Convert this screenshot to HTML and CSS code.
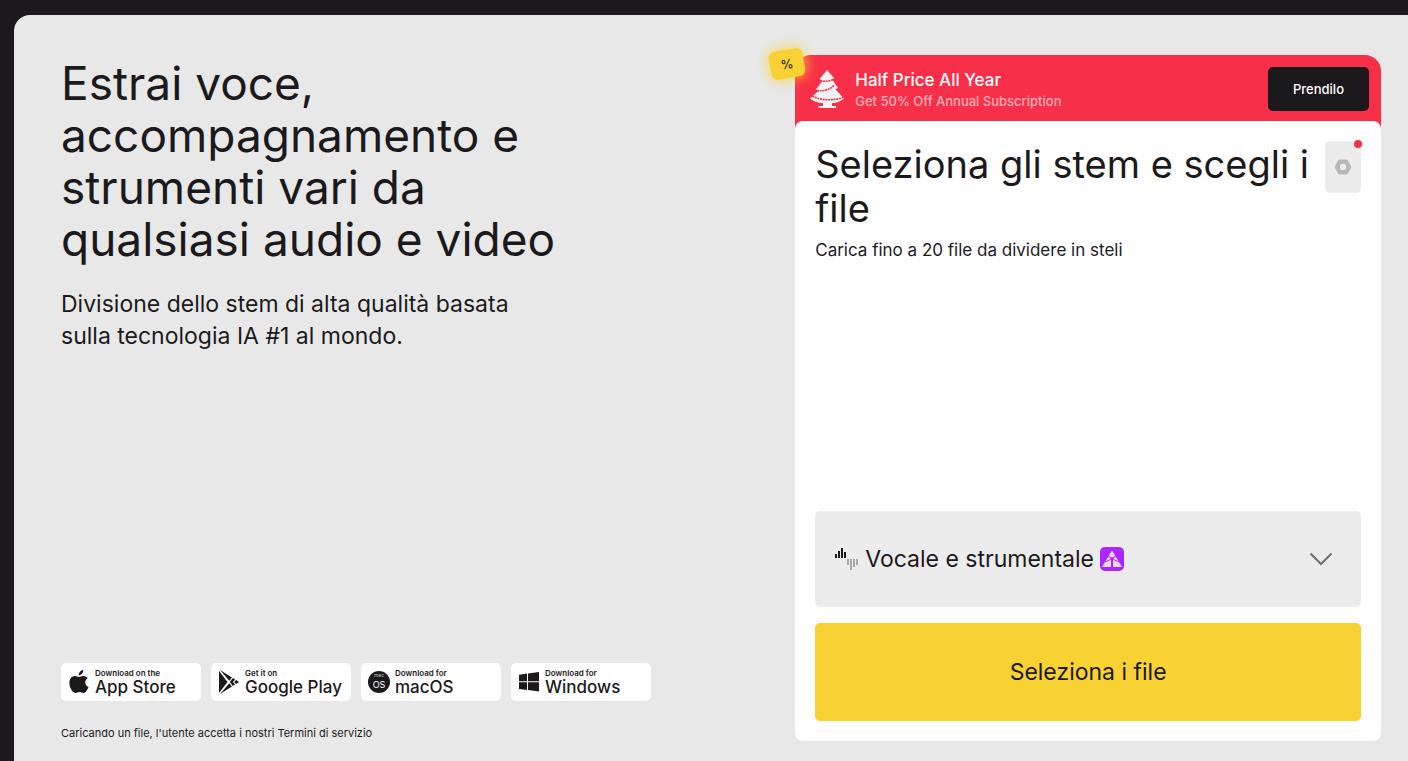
FILE: index.html
```html
<!DOCTYPE html>
<html lang="it">
<head>
    <meta charset="UTF-8">
    <meta name="viewport" content="width=device-width, initial-scale=1.0">
    <title>Estrai voce e strumenti</title>
    <link rel="stylesheet" href="styles.css">
</head>
<body>
    <main class="page">
        <section class="intro">
            <h1>Estrai voce, accompagnamento e strumenti vari da qualsiasi audio e video</h1>
            <p class="lead">Divisione dello stem di alta qualità basata sulla tecnologia IA #1 al mondo.</p>

            <div class="stores">
                <a class="store" href="#">
                    <svg width="20" height="26" viewBox="0 0 20 26" fill="currentColor">
                        <path d="M14.3 1c.2 2.7-2 5.2-4.6 5.3C9.500 3.700 11.700 1.200 14.300 1z" />
                        <path d="M10.200 8c1 0 2.300-1.100 4.400-1 1.700.1 3.200.9 4.100 2.200-3.700 2.300-3 7.200.8 8.700-.8 2.200-2.600 5.900-4.900 6-1.500 0-2.200-.9-4-.9s-2.500.9-3.900.9C3.300 23.800.4 18.500.4 14 .4 9.500 3.200 7.100 6 7c1.800 0 3.200 1 4.200 1z" />
                    </svg>
                    <span class="store-text"><small>Download on the</small>App Store</span>
                </a>
                <a class="store" href="#">
                    <svg width="20" height="26" viewBox="0 0 20 26" fill="currentColor">
                        <path d="M0 2v22l8.500-11z" />
                        <path d="M1 1l9.300 10.700 2.600-3.300zM1 25l9.300-10.700 2.600 3.300z" />
                        <path d="M13.800 9l2.300 1.400L13.900 13l2.200 2.600-2.300 1.400L10.900 13z" />
                        <path d="M17.100 10.900L20 13l-2.900 2.100L15.200 13z" />
                    </svg>
                    <span class="store-text"><small>Get it on</small>Google Play</span>
                </a>
                <a class="store" href="#">
                    <svg class="icon-mac" width="22" height="26" viewBox="0 0 22 26">
                        <circle cx="11" cy="13" r="11" fill="#1c191d" />
                        <text class="mac-small" x="11" y="8" text-anchor="middle">mac</text>
                        <text class="mac-big" x="11" y="19" text-anchor="middle">OS</text>
                    </svg>
                    <span class="store-text"><small>Download for</small>macOS</span>
                </a>
                <a class="store" href="#">
                    <svg width="20" height="26" viewBox="0 0 20 26" fill="currentColor">
                        <path d="M0 5.700l8-1.100v7.700H0zM9 4.500L20 3v9.300H9zM0 13.300h8V21l-8-1.100zM9 13.300h11v9.300L9 21.100z" />
                    </svg>
                    <span class="store-text"><small>Download for</small>Windows</span>
                </a>
            </div>
            <p class="terms">Caricando un file, l'utente accetta i nostri <a href="#">Termini di servizio</a></p>
        </section>

        <section class="card">
            <div class="promo">
                <svg width="34" height="40" viewBox="0 -1 34 40">
                    <path fill="#f5f3f4" d="M17 0l7.500 8.500-2.500.8L28 18l-2.600 1.200L34 28.500c-2.500 2.500-7 4.300-12 4.700V36h4v2H8.500v-2H13v-2.800C8 32.800 3 31 0 28.500L8.500 21 6 19.500l6-8.200L9.500 9z" />
                    <path fill="none" stroke="#f82f48" stroke-width="1.600" stroke-dasharray="2 .7" d="M8 9.500c4 2.500 10 2.500 16-.5M7 20.500c7 1 13-.8 17.500-5.500M2.500 26c8 5 22 4.500 31 1.500" />
                </svg>
                <div class="promo-text">
                    <strong>Half Price All Year</strong>
                    <span>Get 50% Off Annual Subscription</span>
                </div>
                <button type="button" class="promo-button">Prendilo</button>
            </div>
            <span class="percent">%</span>

            <div class="card-body">
                <div class="card-head">
                    <h2>Seleziona gli stem e scegli i file</h2>
                    <button type="button" class="settings" aria-label="Impostazioni">
                        <svg width="18" height="16" viewBox="0 0 18 16">
                            <path fill="#b8b6b8" fill-rule="evenodd" d="M5.500.5h7q.8 0 1.200.7l3.400 6q.4.800 0 1.600l-3.400 6q-.4.700-1.200.7h-7q-.8 0-1.200-.7l-3.400-6q-.4-.8 0-1.600l3.400-6q.4-.7 1.200-.7zM9 4.800a3.200 3.200 0 100 6.400 3.200 3.200 0 000-6.400z" />
                        </svg>
                        <span class="dot"></span>
                    </button>
                </div>
                <p class="hint">Carica fino a 20 file da dividere in steli</p>

                <div class="stem-select">
                    <svg width="24" height="24" viewBox="0 0 24 24">
                        <path fill="#1c191d" d="M0 7h2v4H0zM3 4h2v7H3zM6 1h2v10H6zM9 5h2v6H9z" />
                        <path fill="#a9a8a9" d="M12 12h2v6h-2zM15 12h2v11h-2zM18 12h2v8h-2zM21 12h2v6h-2z" />
                    </svg>
                    <select id="stem" aria-label="Stem">
                        <option>Vocale e strumentale</option>
                    </select>
                    <svg width="24" height="24" viewBox="0 0 24 24">
                        <rect width="24" height="24" rx="5" fill="#ae26ff" />
                        <path fill="#efd8ff" d="M12 3.500L2 20h20z" />
                        <path stroke="#ae26ff" stroke-width="1" fill="none" d="M8 9.500l3 1M16 9.500l-3 1M5 15l5.500-2.500M19 15l-5.500-2.500" />
                        <path fill="#ae26ff" d="M10 11.500l2-1.500 2 1.500-1 2v7h-2v-7z" />
                    </svg>
                    <svg class="chevron" width="24" height="14" viewBox="0 0 24 14" fill="none" stroke="#706e70" stroke-width="2">
                        <path d="M1.500 1.500L12 12 22.500 1.500" />
                    </svg>
                </div>
                <button type="button" class="upload">Seleziona i file</button>
            </div>
        </section>
    </main>
</body>
</html>
```
FILE: styles.css
```css
* {
    box-sizing: border-box;
}

body {
    margin: 0;
    padding: 15px 0 0 14px;
    min-height: 100vh;
    display: flex;
    background: #1c191d;
    color: #1c191d;
    font-family: Inter, "Liberation Sans", sans-serif;
}

h1, h2, p {
    margin: 0;
    font-weight: 400;
}

a {
    color: inherit;
    text-decoration: none;
}

button, select {
    border: none;
    font-family: inherit;
    color: inherit;
    cursor: pointer;
}

svg {
    flex-shrink: 0;
}

.page {
    flex: 1;
    display: grid;
    grid-template-columns: 5fr 4fr;
    gap: 2px;
    padding: 40px 27px 20px 47px;
    background: #e8e8e8;
    border-radius: 16px 0 0 0;
}

.intro {
    display: flex;
    flex-direction: column;
    padding-top: 2px;
}

.intro h1 {
    max-width: 520px;
    font-size: 46px;
    line-height: 52px;
}

.lead {
    max-width: 480px;
    margin-top: 23px;
    font-size: 23px;
    line-height: 32px;
}

.stores {
    display: flex;
    gap: 10px;
    margin-top: auto;
}

.store {
    display: flex;
    align-items: center;
    gap: 6px;
    width: 140px;
    height: 38px;
    padding-left: 8px;
    border-radius: 5px;
    background: #fff;
}

.store-text {
    font-size: 17px;
    font-weight: 500;
    line-height: 18px;
    white-space: nowrap;
}

.store-text small {
    display: block;
    font-size: 8px;
    font-weight: 600;
    line-height: 10px;
}

.icon-mac {
    margin: 0 -1px;
}

.mac-small, .mac-big {
    fill: #fff;
    font-size: 9px;
}

.mac-small {
    font-size: 5px;
    opacity: 0.7;
}

.terms {
    margin-top: 24px;
    font-size: 11px;
    line-height: 16px;
}

.card {
    position: relative;
    display: flex;
    flex-direction: column;
}

.percent {
    position: absolute;
    top: -5px;
    left: -25px;
    width: 34px;
    height: 28px;
    border-radius: 6px;
    background: #f8d132;
    box-shadow: 0 0 14px #f8d132;
    font-size: 13px;
    line-height: 28px;
    text-align: center;
    transform: rotate(-10deg);
}

/* the red strip runs on under the rounded corners of the white panel */
.promo {
    display: flex;
    align-items: center;
    gap: 11px;
    margin-bottom: -8px;
    padding: 12px 12px 18px 15px;
    border-radius: 16px 16px 0 0;
    background: #f82f48;
    color: #fff;
}

.promo-text {
    flex: 1;
}

.promo-text strong, .promo-text span {
    display: block;
    font-size: 17px;
    font-weight: 500;
    line-height: 24px;
}

.promo-text span {
    font-size: 13px;
    line-height: 18px;
    opacity: 0.6;
}

.promo-button {
    height: 44px;
    padding: 0 25px;
    border-radius: 5px;
    background: #1c191d;
    color: #fff;
    font-size: 13px;
    font-weight: 500;
}

.card-body {
    flex: 1;
    display: flex;
    flex-direction: column;
    padding: 20px;
    border-radius: 8px;
    background: #fff;
}

.card-head {
    display: flex;
    justify-content: space-between;
}

.card-head h2 {
    padding-top: 1px;
    font-size: 38px;
    line-height: 44px;
}

.settings {
    position: relative;
    flex-shrink: 0;
    display: flex;
    align-items: center;
    justify-content: center;
    width: 36px;
    height: 52px;
    padding: 0;
    border-radius: 5px;
    background: #ececec;
}

.dot {
    position: absolute;
    top: -1px;
    right: -1px;
    width: 8px;
    height: 8px;
    border-radius: 50%;
    background: #f82f48;
}

.hint {
    margin-top: 8px;
    font-size: 17px;
    line-height: 24px;
}

.stem-select {
    display: flex;
    align-items: center;
    gap: 6px;
    height: 96px;
    margin-top: auto;
    padding: 0 28px 0 20px;
    border-radius: 5px;
    background: #ececec;
}

.stem-select select {
    appearance: none;
    padding: 0;
    background: none;
    font-size: 23px;
}

.chevron {
    margin-left: auto;
}

.upload {
    height: 98px;
    margin-top: 16px;
    border-radius: 5px;
    background: #f8d132;
    font-size: 23px;
}

@media (max-width: 1024px) {
    .page {
        grid-template-columns: 1fr;
        gap: 40px;
    }

    .stores {
        flex-wrap: wrap;
        margin-top: 40px;
    }

    .card {
        min-height: 600px;
    }
}
```
